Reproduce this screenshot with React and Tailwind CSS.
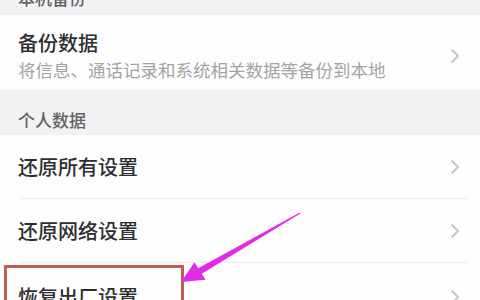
import React from "react";

const font = { fontFamily: '"Noto Sans CJK SC", "Noto Sans", sans-serif' };

function Chevron() {
  return (
    <svg width="10" height="16" viewBox="0 0 10 16" className="shrink-0">
      <path d="M2 2 L8 8 L2 14" fill="none" stroke="#c4c4c8" strokeWidth="1.8" strokeLinecap="round" strokeLinejoin="round" />
    </svg>
  );
}

function SectionHeader({ children, className = "" }) {
  return (
    <div className={`h-[45px] flex items-end pb-[6px] pl-[18px] bg-[#f2f2f5] ${className}`}>
      <span className="text-[17px] leading-[18px] font-medium text-[#626265]">{children}</span>
    </div>
  );
}

function Row({ title, divider = true }) {
  return (
    <div className="bg-[#fdfdfe]">
      <div className="h-[63px] flex items-center justify-between pl-[18px] pr-[20px]">
        <span className="text-[20px] leading-[24px] font-medium text-[#2e2e30]">{title}</span>
        <Chevron />
      </div>
      {divider && <div className="h-px bg-[#ebebee] ml-[20px] mr-[13px]" />}
    </div>
  );
}

export default function App() {
  return (
    <div className="relative w-[480px] h-[300px] overflow-hidden bg-[#f2f2f5]" style={font}>
      <SectionHeader className="-mt-[32px]">本机备份</SectionHeader>
      <div className="bg-[#fdfdfe] mt-[2px] flex items-center justify-between pl-[18px] pr-[20px] pt-[16px] pb-[10px]">
        <div className="flex flex-col gap-[5px]">
          <span className="text-[20px] leading-[24px] font-medium text-[#2e2e30]">备份数据</span>
          <span className="text-[17.5px] leading-[20px] text-[#a3a3a6]">将信息、通话记录和系统相关数据等备份到本地</span>
        </div>
        <Chevron />
      </div>
      <SectionHeader>个人数据</SectionHeader>
      <Row title="还原所有设置" />
      <Row title="还原网络设置" />
      <div className="bg-[#fdfdfe] h-[80px] flex items-start justify-between pl-[18px] pr-[20px] pt-[22px]">
        <span className="text-[20px] leading-[24px] font-medium text-[#2e2e30]">恢复出厂设置</span>
        <div className="pt-[4px]"><Chevron /></div>
      </div>

      <div className="absolute left-[4px] top-[265px] w-[180px] h-[60px] border-[3px] border-[#c45c56]" />
      <svg className="absolute left-0 top-0" width="480" height="300" viewBox="0 0 480 300">
        <polygon
          points="299.8,212.4 198.2,268.2 194.5,262.2 181,282 205.5,279.8 201.8,273.8 300.3,213.6"
          fill="#e22be6"
        />
      </svg>
    </div>
  );
}
